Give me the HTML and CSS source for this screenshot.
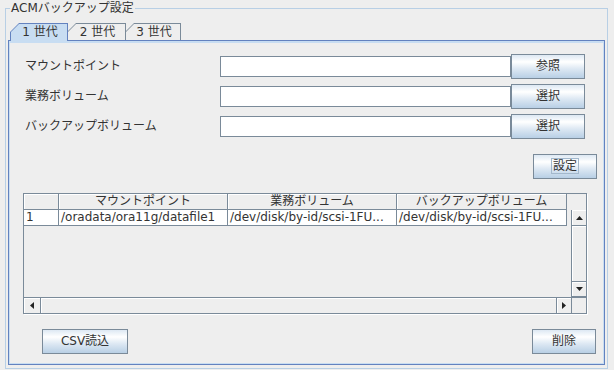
FILE: index.html
```html
<!DOCTYPE html>
<html lang="ja">

<head>
  <meta charset="UTF-8">
  <title>ACMバックアップ設定</title>
  <link rel="stylesheet" href="styles.css">
</head>

<body>
  <fieldset class="group">
    <legend class="group-title">ACMバックアップ設定</legend>

    <!-- generation tabs -->
    <div class="tab-strip">
      <div class="tab tab-selected"><span class="tab-face">1 世代</span></div>
      <div class="tab tab-second"><span class="tab-face">2 世代</span></div>
      <div class="tab tab-third"><span class="tab-face">3 世代</span></div>
    </div>

    <div class="tab-panel">
      <div class="path-form">
        <label class="field-label">マウントポイント</label>
        <input type="text" class="text-field">
        <button class="btn">参照</button>

        <label class="field-label">業務ボリューム</label>
        <input type="text" class="text-field">
        <button class="btn">選択</button>

        <label class="field-label">バックアップボリューム</label>
        <input type="text" class="text-field">
        <button class="btn">選択</button>
      </div>

      <div class="apply-row">
        <button class="btn btn-apply"><span class="focus-ring">設定</span></button>
      </div>

      <div class="scroll-pane">
        <div class="viewport">
          <table class="volume-table">
            <colgroup>
              <col class="col-num">
              <col class="col-path">
              <col class="col-path">
              <col class="col-last">
            </colgroup>
            <thead>
              <tr>
                <th></th>
                <th>マウントポイント</th>
                <th>業務ボリューム</th>
                <th>バックアップボリューム</th>
              </tr>
            </thead>
            <tbody>
              <tr>
                <td>1</td>
                <td>/oradata/ora11g/datafile1</td>
                <td>/dev/disk/by-id/scsi-1FU...</td>
                <td>/dev/disk/by-id/scsi-1FU...</td>
              </tr>
            </tbody>
          </table>
        </div>

        <div class="vscroll">
          <div class="arrow-btn arrow-up">
            <svg width="7" height="4" viewBox="0 0 7 4"><polygon points="0,4 3.5,0 7,4" fill="#222"/></svg>
          </div>
          <div class="track"></div>
          <div class="arrow-btn arrow-down">
            <svg width="7" height="4" viewBox="0 0 7 4"><polygon points="0,0 7,0 3.5,4" fill="#222"/></svg>
          </div>
        </div>

        <div class="hscroll">
          <div class="arrow-btn arrow-left">
            <svg width="4" height="7" viewBox="0 0 4 7"><polygon points="4,0 4,7 0,3.5" fill="#222"/></svg>
          </div>
          <div class="track"></div>
          <div class="arrow-btn arrow-right">
            <svg width="4" height="7" viewBox="0 0 4 7"><polygon points="0,0 4,3.5 0,7" fill="#222"/></svg>
          </div>
        </div>

        <div class="corner"></div>
      </div>

      <div class="bottom-row">
        <button class="btn btn-csv">CSV読込</button>
        <button class="btn btn-delete">削除</button>
      </div>
    </div>
  </fieldset>
</body>

</html>
```

FILE: styles.css
```css
* {
  box-sizing: border-box;
}

body {
  margin: 0;
  background: #eeeeee;
  font-family: "DejaVu Sans", "Noto Sans CJK JP", sans-serif;
  font-size: 12px;
  color: #333333;
}

/* titled border */
.group {
  display: flex;
  flex-direction: column;
  height: 369px;
  min-width: 0;
  margin: 0 6px 0 5px;
  padding: 7px 0 0;
  border: 1px solid #b8cfe5;
}

.group-title {
  margin-left: 4px;
  padding: 0 1px;
  line-height: 16px;
}

/* tabs */
.tab-strip {
  position: relative;
  z-index: 1;
  display: flex;
  align-items: flex-start;
  height: 18px;
  margin: 0 0 -1px 4px;
}

.tab {
  height: 17px;
  padding: 1px 1px 0 1px;
  background: #7a8a99;
  clip-path: polygon(0 9px, 9px 0, 100% 0, 100% 100%, 0 100%);
}

.tab-face {
  display: block;
  height: 100%;
  background: #eeeeee;
  clip-path: polygon(0 8px, 8px 0, 100% 0, 100% 100%, 0 100%);
  text-align: center;
  line-height: 16px;
  padding-left: 2px;
}

.tab-selected {
  position: relative;
  z-index: 2;
  width: 58px;
  height: 18px;
  background: #6382bf;
}

.tab-selected .tab-face {
  background: #c8ddf2;
  line-height: 17px;
}

.tab-second {
  width: 59px;
  margin-left: -1px;
}

.tab-third {
  width: 56px;
  margin-left: -1px;
}

.tab-panel {
  flex: 1;
  display: flex;
  flex-direction: column;
  margin: 0 2px 3px 2px;
  border: 1px solid #6382bf;
  box-shadow: inset 0 2px 0 #c8ddf2, inset 1px 0 0 #c8ddf2, inset -1px -1px 0 #c8ddf2;
}

/* path fields */
.path-form {
  display: grid;
  grid-template-columns: 195px 291px 74px;
  grid-auto-rows: 25px;
  row-gap: 5px;
  align-items: center;
  margin: 13px 0 0 16px;
}

.field-label {
  line-height: 15px;
}

.text-field {
  height: 21px;
  padding: 0 2px;
  border: 1px solid #7a8a99;
  background: #ffffff;
  font: inherit;
  outline: none;
}

.btn {
  height: 25px;
  padding: 0;
  border: 1px solid #7a8a99;
  background: linear-gradient(#dde8f3 0%, #ffffff 30%, #dde8f3 60%, #b8cfe5 100%);
  font: inherit;
  line-height: 15px;
  color: #333333;
}

.apply-row {
  display: flex;
  justify-content: flex-end;
  margin: 15px 7px 0 0;
}

.btn-apply {
  width: 64px;
}

.focus-ring {
  padding: 0 1px;
  outline: 1px solid #a3b8cc;
  outline-offset: 0;
}

/* table in scroll pane */
.scroll-pane {
  display: grid;
  grid-template-columns: 547px 15px;
  grid-template-rows: 16px 87px 16px;
  width: 564px;
  height: 121px;
  margin: 14px 0 0 14px;
  border: 1px solid #7a8a99;
  box-shadow: 1px 1px 0 #ffffff;
}

.viewport {
  grid-column: 1;
  grid-row: 1 / 3;
  overflow: hidden;
  background: #eeeeee;
}

.volume-table {
  width: 543px;
  table-layout: fixed;
  border-collapse: separate;
  border-spacing: 0;
}

.col-num {
  width: 35px;
}

.col-path {
  width: 169px;
}

.col-last {
  width: 170px;
}

.volume-table th,
.volume-table td {
  height: 16px;
  padding: 0 2px;
  border-right: 1px solid #7a8a99;
  border-bottom: 1px solid #7a8a99;
  line-height: 15px;
  white-space: nowrap;
  overflow: hidden;
}

.volume-table th {
  font-weight: normal;
  text-align: center;
  background: #eeeeee;
  box-shadow: inset 1px 1px 0 #ffffff;
}

.volume-table td {
  text-align: left;
  background: #ffffff;
}

.vscroll {
  grid-column: 2;
  grid-row: 2;
  display: flex;
  flex-direction: column;
  border-left: 1px solid #7a8a99;
}

.hscroll {
  grid-column: 1;
  grid-row: 3;
  display: flex;
  border-top: 1px solid #7a8a99;
}

.corner {
  grid-column: 2;
  grid-row: 3;
  border-left: 1px solid #7a8a99;
  border-top: 1px solid #7a8a99;
}

.track {
  flex: 1;
  background: #eeeeee;
  box-shadow: inset 1px 1px 0 #ffffff;
}

.arrow-btn {
  display: flex;
  align-items: center;
  justify-content: center;
  background: #eeeeee;
  box-shadow: inset 1px 1px 0 #ffffff;
}

.arrow-up {
  height: 16px;
  border-bottom: 1px solid #7a8a99;
}

.arrow-down {
  height: 16px;
  border-top: 1px solid #7a8a99;
  border-bottom: 1px solid #7a8a99;
}

.arrow-left {
  width: 17px;
  border-right: 1px solid #7a8a99;
}

.arrow-right {
  width: 15px;
  border-left: 1px solid #7a8a99;
}

/* bottom actions */
.bottom-row {
  display: flex;
  justify-content: space-between;
  margin: 15px 8px 0 33px;
}

.btn-csv {
  width: 86px;
}

.btn-delete {
  width: 64px;
}
```
